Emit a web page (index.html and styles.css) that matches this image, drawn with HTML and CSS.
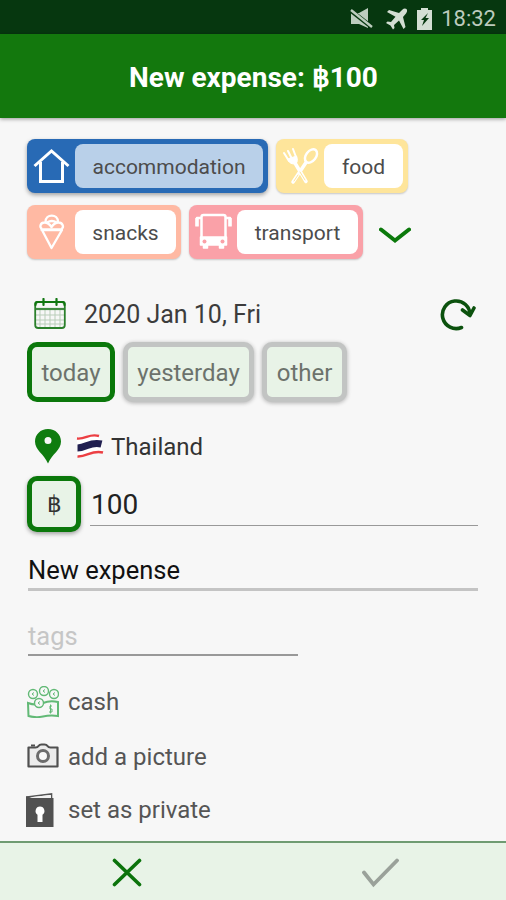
FILE: index.html
```html
<!DOCTYPE html>
<html lang="en">
    <head>
        <meta charset="utf-8">
        <title>New expense</title>
        <link rel="stylesheet" href="styles.css">
    </head>
    <body>
        <div class="status-bar">
            <svg class="mute" width="24" height="22" viewBox="0 0 24 22">
                <path d="M1 5h8l9-5v20l-9-4H1z" fill="#bdcdbf"/>
                <path d="M0 2l23 18" stroke="#06370f" stroke-width="4.500"/>
                <path d="M1 2l21 17" stroke="#bdcdbf" stroke-width="2.400"/>
            </svg>
            <svg class="plane" width="22" height="22" viewBox="0 0 22 22">
                <path d="M20.5 1c-1.2-1-3-.5-4.200.7L13 5 3 2 1 4l8.500 4.700L5 14l-3.500-.5L0 15l4.500 2.500L7 21.500l1.500-1.500L8 17l5-4.500L17.500 21l2-2L17 9l3-3.500c1.200-1.400 1.500-3.300.5-4.500z" fill="#d3ded3"/>
            </svg>
            <svg class="battery" width="15" height="22" viewBox="0 0 15 22">
                <path d="M4 0h7v2h4v20H0V2h4z" fill="#d3ded3"/>
                <path d="M11 5l-7 7h3l-2 6 7-8H8.500l2.500-5z" fill="#06370f"/>
            </svg>
            <span class="clock">18:32</span>
        </div>
        <div class="header">
            <h1>New expense: ฿100</h1>
        </div>

        <div class="content">
            <div class="categories">
                <div class="category accommodation">
                    <svg width="48" height="54" viewBox="0 0 48 54" fill="none" stroke="#fff" stroke-width="3">
                        <path d="M7.500 27L24.500 12 41.500 27M13.500 23v19.500h22V23"/>
                    </svg>
                    <span>accommodation</span>
                </div>
                <div class="category food">
                    <svg width="48" height="54" viewBox="0 0 48 54" fill="none" stroke="#fff" stroke-width="2.500" stroke-linecap="round">
                        <path d="M8 14l5 8M12 12l4 8M17 10l3 8" stroke-width="2"/>
                        <path d="M11.500 20l9-3q2 5-.5 7.500-6 2-8.500-4.500z" fill="#fff" stroke-width="1"/>
                        <path d="M19 24l11 18.500" stroke-width="3.500"/>
                        <ellipse cx="35" cy="17" rx="5" ry="7.500" transform="rotate(38 35 17)"/>
                        <path d="M30 23.500L17 43" stroke-width="3.500"/>
                        <path d="M24 33l5 8M22 36l-4 6" stroke="#fee59b" stroke-width="1"/>
                    </svg>
                    <span>food</span>
                </div>
                <div class="category snacks">
                    <svg width="48" height="54" viewBox="0 0 48 54" fill="none" stroke="#fff" stroke-width="2.300" stroke-linejoin="round">
                        <path d="M15 25h20L24.500 43zM13.500 24.500h22.500"/>
                        <path d="M15 24c-3-2-1.500-6.500 2.500-6.500 3.500 0 6 3 7 4.500 1-1.500 3.500-4.500 7-4.500 4 0 6 4.500 3 6.500M18.500 17c0-8.500 12.500-8.500 12.500 0"/>
                        <path d="M20 17.500q5-3 9.500 0"/>
                    </svg>
                    <span>snacks</span>
                </div>
                <div class="category transport">
                    <svg width="48" height="54" viewBox="0 0 48 54" fill="none" stroke="#fff" stroke-width="2.500" stroke-linejoin="round">
                        <path d="M12.500 33V12q0-2 2-2h20q2 0 2 2v21M12.500 13H8v8M36.500 13H41v8"/>
                        <path d="M8 13v8.500M41 13v8.500" stroke-width="3.500"/>
                        <path d="M11.500 32h26v8h-3v3h-4v-3h-12v3h-4v-3h-3z" fill="#fff" stroke-width="1.500"/>
                        <circle cx="15.500" cy="36.500" r="2" fill="#faa1a8" stroke="none"/>
                        <circle cx="33.500" cy="36.500" r="2" fill="#faa1a8" stroke="none"/>
                    </svg>
                    <span>transport</span>
                </div>
                <svg class="more" width="32" height="17" viewBox="0 0 32 17" fill="none" stroke="#0b790b" stroke-width="4" stroke-linecap="round">
                    <path d="M2 2.500L16 13.500 30 2.500"/>
                </svg>
            </div>

            <div class="date-row">
                <svg width="32" height="32" viewBox="0 0 32 32" fill="none">
                    <path d="M6 12v17M11 12v17M16 12v17M21 12v17M26 12v17M2 17h28M2 22h28M2 26h28" stroke="#b9cdb9"/>
                    <rect x="1.200" y="4" width="29.600" height="26" rx="3" stroke="#2b802b" stroke-width="1.800"/>
                    <path d="M2 11h28" stroke="#408a40" stroke-width="2.200"/>
                    <path d="M1.500 7V5.500Q1.500 4 3 4h26q1.500 0 1.500 1.500V7M9.500 1v6M22.500 1v6" stroke="#107610" stroke-width="2.200" stroke-linecap="round"/>
                </svg>
                <span class="date">2020 Jan 10, Fri</span>
                <svg class="refresh" width="36" height="34" viewBox="0 0 36 34" fill="none" stroke="#0c520e" stroke-width="3.600" stroke-linecap="round" stroke-linejoin="round">
                    <path d="M21.500 30.500A13.800 13.800 0 1 1 30 18M22.500 13l7.500 5.500 4-7.500"/>
                </svg>
            </div>
            <div class="days">
                <div class="day selected">today</div>
                <div class="day">yesterday</div>
                <div class="day">other</div>
            </div>

            <div class="place">
                <svg class="pin" width="26" height="35" viewBox="0 0 26 35">
                    <path d="M13 0C5.500 0 0 5.500 0 12.500 0 21 9 25 13 34.500 17 25 26 21 26 12.500 26 5.500 20.500 0 13 0zm0 8a3.500 3.500 0 1 1 0 7 3.500 3.500 0 0 1 0-7z" fill="#0f7c0f" fill-rule="evenodd"/>
                </svg>
                <svg class="flag" width="28" height="24" viewBox="0 0 28 24" fill="none">
                    <path d="M1 4C10 6 12-1 23 2l4 16c-10-3-15 4-25.500 4z" fill="#fff"/>
                    <path d="M1 4.500C10 5.500 13-1 23 2M1.500 22.500C11 23 16 15.500 27 18.500" stroke="#ec3f43" stroke-width="2.400"/>
                    <path d="M1.500 14C11 14 14 7 25.500 10" stroke="#211f50" stroke-width="7"/>
                </svg>
                <span>Thailand</span>
            </div>
            <div class="amount">
                <div class="currency">฿</div>
                <div class="value">100</div>
            </div>
            <div class="name">New expense</div>
            <div class="tags">tags</div>

            <div class="option cash">
                <svg width="32" height="32" viewBox="0 0 32 32" fill="none" stroke="#62b976" stroke-width="1.400">
                    <path d="M1 17q8 3 15 0t15-1v14q-8-1-15 .5T1.500 30z" stroke-width="2"/>
                    <circle cx="6" cy="8" r="4.500" fill="#f7f7f7"/>
                    <circle cx="17" cy="5" r="4.500" fill="#f7f7f7"/>
                    <circle cx="27" cy="8" r="4.500" fill="#f7f7f7"/>
                    <circle cx="12" cy="17" r="4.500" fill="#f7f7f7"/>
                    <path d="M7 6.500L5 8l2 1.500M18 3.500L16 5l2 1.500M28 6.500L26 8l2 1.500M13 15.500L11 17l2 1.500M25 20h-2v3h2v3h-3M23.500 18.500v9" stroke-width="1"/>
                </svg>
                <span>cash</span>
            </div>
            <div class="option picture">
                <svg width="32" height="26" viewBox="0 0 32 26" fill="none" stroke="#505050" stroke-width="2.200">
                    <path d="M1.500 4.500h7q2 0 3-1.500t3-1.500h3q2 0 3 1.500t3 1.500h7v19h-29z" fill="#ececec" stroke-linejoin="round"/>
                    <circle cx="16" cy="13" r="5.500" fill="#f7f7f7" stroke-width="3" stroke="#6b6b6b"/>
                    <path d="M4 2.500h4" stroke-width="2"/>
                </svg>
                <span>add a picture</span>
            </div>
            <div class="option private">
                <svg width="32" height="34" viewBox="0 0 32 34">
                    <path d="M1 4L25.500 1v5" fill="none" stroke="#555" stroke-width="1.600"/>
                    <path d="M0 3l6 2h21.500v29H0z" fill="#515151"/>
                    <path d="M4 4.200L25 2v3H8z" fill="#f2f2f2"/>
                    <path d="M14 13.500a4.500 4.500 0 0 1 2.500 8.200V29h-5v-7.300A4.500 4.500 0 0 1 14 13.500z" fill="#fff"/>
                </svg>
                <span>set as private</span>
            </div>
        </div>

        <div class="footer">
            <svg class="cancel" width="30" height="30" viewBox="0 0 30 30" fill="none" stroke="#0b730b" stroke-width="3.600" stroke-linecap="round">
                <path d="M2.500 2.500l25 24M27.500 2.500l-25 24"/>
            </svg>
            <svg class="confirm" width="38" height="30" viewBox="0 0 38 30" fill="none" stroke="#9aa19a" stroke-width="3.800" stroke-linecap="round">
                <path d="M3 14.500l9.500 12L36 2.500"/>
            </svg>
        </div>
    </body>
</html>
```
FILE: styles.css
```css
* {
    box-sizing: border-box;
}
body {
    margin: 0;
    height: 900px;
    display: flex;
    flex-direction: column;
    background-color: #f7f7f7;
    font-family: Roboto, "Liberation Sans", sans-serif;
    font-size: 24px;
    color: #555;
    overflow: hidden;
}
svg {
    display: block;
    flex-shrink: 0;
}
.status-bar {
    height: 34px;
    background-color: #06370f;
    display: flex;
    justify-content: flex-end;
    align-items: center;
    padding: 3px 10px 0 0;
}
.mute { margin-right: 12px; }
.plane { margin-right: 9px; }
.battery { margin-right: 9px; }
.clock {
    color: #bccbbd;
    font-size: 22px;
}
.header {
    height: 84px;
    background-color: #13780d;
    display: flex;
    align-items: center;
    justify-content: center;
    box-shadow: 0 1px 4px rgba(0, 0, 0, 0.4);
}
h1 {
    margin: 3px 0 0 1px;
    color: white;
    font-size: 28px;
    font-weight: 700;
}
.content {
    flex: 1;
    padding: 21px 28px 0 27px;
}

.categories {
    display: flex;
    flex-wrap: wrap;
    gap: 12px 8px;
}
.category {
    height: 54px;
    display: flex;
    align-items: center;
    padding-right: 5px;
    border-radius: 8px;
    box-shadow: 0 1px 2px rgba(0, 0, 0, 0.2);
}
.category span {
    flex: 1;
    height: 44px;
    line-height: 46px;
    text-align: center;
    border-radius: 8px;
    background-color: white;
    font-size: 21px;
    color: #4c4c4c;
}
.accommodation {
    width: 241px;
    background-color: #286ab5;
    box-shadow: 0 2px 4px rgba(0, 0, 0, 0.35);
}
.category.accommodation span { background-color: #b9d0e9; }
.food {
    width: 132px;
    background-color: #fee59b;
}
.snacks {
    width: 154px;
    background-color: #ffb9a3;
}
.transport {
    width: 174px;
    background-color: #faa1a8;
}
.more { margin: 22px 0 0 8px; }

.date-row {
    display: flex;
    align-items: center;
    height: 40px;
    margin-top: 35px;
    padding: 0 2px 0 7px;
}
.date {
    flex: 1;
    margin-left: 18px;
    font-size: 25px;
    color: #3c3c3c;
}
.days {
    display: flex;
    gap: 8px;
    margin-top: 8px;
}
.day {
    height: 60px;
    width: 131px;
    line-height: 52px;
    text-align: center;
    border: 5px solid #c2c4c3;
    border-radius: 10px;
    background-color: #e8f3e7;
    color: #6c726c;
    box-shadow: 0 1px 4px rgba(0, 0, 0, 0.3);
}
.day:first-child { width: 88px; }
.day:last-child { width: 85px; }
.selected {
    border-color: #0b780b;
    box-shadow: none;
}

.place {
    display: flex;
    align-items: center;
    height: 36px;
    margin-top: 26px;
    padding-left: 8px;
    color: #333;
}
.place span { padding-top: 1px; }
.flag { margin: 0 7px 0 15px; }
.amount {
    display: flex;
    gap: 9px;
    margin-top: 12px;
}
.currency {
    width: 54px;
    height: 56px;
    line-height: 48px;
    text-align: center;
    border: 5px solid #0b780b;
    border-radius: 10px;
    background-color: #e8f3e7;
    color: #333;
    font-size: 23px;
    box-shadow: 0 2px 4px rgba(0, 0, 0, 0.35);
}
.value {
    flex: 1;
    height: 50px;
    line-height: 58px;
    padding-left: 1px;
    border-bottom: 1px solid #999;
    font-size: 28px;
    color: #222;
}
.name {
    height: 40px;
    margin: 19px 0 0 1px;
    line-height: 38px;
    border-bottom: 3px solid #c4c4c4;
    font-size: 25.500px;
    color: #111;
}
.tags {
    width: 270px;
    height: 40px;
    margin: 25px 0 0 1px;
    line-height: 40px;
    border-bottom: 2px solid #999;
    font-size: 25.500px;
    color: #c6c6c6;
}
.option {
    display: flex;
    align-items: center;
    gap: 9px;
    height: 54px;
}
.cash { margin-top: 19px; }
.picture span { padding-top: 2px; }
.private svg { margin: 0 1px 0 -1px; }

.footer {
    height: 59px;
    background-color: #e8f3e7;
    border-top: 2px solid #6f9b72;
    display: flex;
    align-items: center;
    padding-top: 3px;
}
.cancel { margin-left: 112px; }
.confirm { margin-left: 219px; }
```
